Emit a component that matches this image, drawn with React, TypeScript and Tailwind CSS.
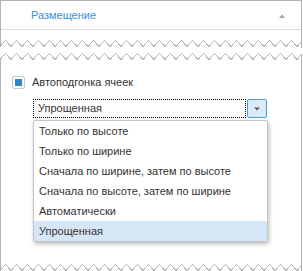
import React from 'react';

const items = [
  'Только по высоте',
  'Только по ширине',
  'Сначала по ширине, затем по высоте',
  'Сначала по высоте, затем по ширине',
  'Автоматически',
  'Упрощенная',
];

// torn edge: trough at x=0, period 11
const zigPoints = (peak: number, trough: number) => {
  const pts: string[] = [];
  for (let i = 0; i * 5.5 <= 308; i++) {
    pts.push(`${i * 5.5},${i % 2 === 0 ? trough : peak}`);
  }
  return pts.join(' ');
};

const Zig: React.FC<{ h: number; peak: number; trough: number; sides: 'up' | 'down' }> = ({ h, peak, trough, sides }) => (
  <svg width="302" height={h} className="block" shapeRendering="crispEdges">
    <polyline points={zigPoints(peak, trough)} fill="none" stroke="#b9b9b9" strokeWidth="1" />
    {sides === 'up' ? (
      <>
        <line x1="0.5" y1="0" x2="0.5" y2={trough} stroke="#b3b3b3" />
        <line x1="301.5" y1="0" x2="301.5" y2={h} stroke="#b3b3b3" />
      </>
    ) : (
      <>
        <line x1="0.5" y1={trough} x2="0.5" y2={h} stroke="#b3b3b3" />
        <line x1="301.5" y1={peak} x2="301.5" y2={h} stroke="#b3b3b3" />
      </>
    )}
  </svg>
);

export default function App() {
  return (
    <div
      className="w-[303px] h-[271px] bg-white overflow-hidden text-[11px] text-[#333]"
      style={{ fontFamily: '"Liberation Sans", Arial, sans-serif' }}
    >
      {/* Top piece */}
      <div className="w-[302px] h-[40px] border-x border-t border-[#b3b3b3]">
        <div className="h-[29px] border-b border-[#dcdcdc] flex items-center justify-between pl-[30px] pr-[16px]">
          <span className="text-[#3b8fdc] text-[11px]">Размещение</span>
          <svg width="6" height="4" viewBox="0 0 6 4" className="mt-[1px]">
            <path d="M0 4 L3 0.5 L6 4 Z" fill="#a5a5a5" />
          </svg>
        </div>
      </div>
      <Zig h={8} peak={0.5} trough={6.5} sides="up" />

      <div className="h-[5px]" />

      <Zig h={7} peak={0.5} trough={6.5} sides="down" />

      {/* Lower piece */}
      <div className="w-[302px] h-[204px] border-x border-[#b3b3b3] flex flex-col">
        <div className="mt-[16px] ml-[11px] flex items-center h-[13px]">
          <div className="w-[13px] h-[13px] border border-[#c9c9c9] rounded-[2px] flex items-center justify-center bg-white">
            <div className="w-[7px] h-[7px] bg-[#2a87d0]" />
          </div>
          <span className="ml-[7px]">Автоподгонка ячеек</span>
        </div>

        <div className="mt-[10px] ml-[32px] w-[234px] h-[19px] flex">
          <div className="flex-1 border border-dotted border-black flex items-center pl-[4px]">Упрощенная</div>
          <div className="w-[20px] ml-[1px] border border-[#4e9ddf] rounded-[2px] bg-[#d9eaf8] flex items-center justify-center">
            <svg width="6" height="4" viewBox="0 0 6 4">
              <path d="M0 0.5 L6 0.5 L3 3.5 Z" fill="#555" />
            </svg>
          </div>
        </div>

        <div className="mt-[2px] ml-[32px] w-[235px] border border-[#c6c6c6] rounded-[2px] bg-white shadow-[1px_2px_4px_rgba(0,0,0,0.28)]">
          {items.map((t, i) => (
            <div
              key={t}
              className={`h-[20px] flex items-center pl-[5px] ${i === items.length - 1 ? 'bg-[#d5e7f6]' : ''}`}
            >
              {t}
            </div>
          ))}
        </div>
      </div>

      <Zig h={7} peak={0.5} trough={6.5} sides="up" />
    </div>
  );
}
